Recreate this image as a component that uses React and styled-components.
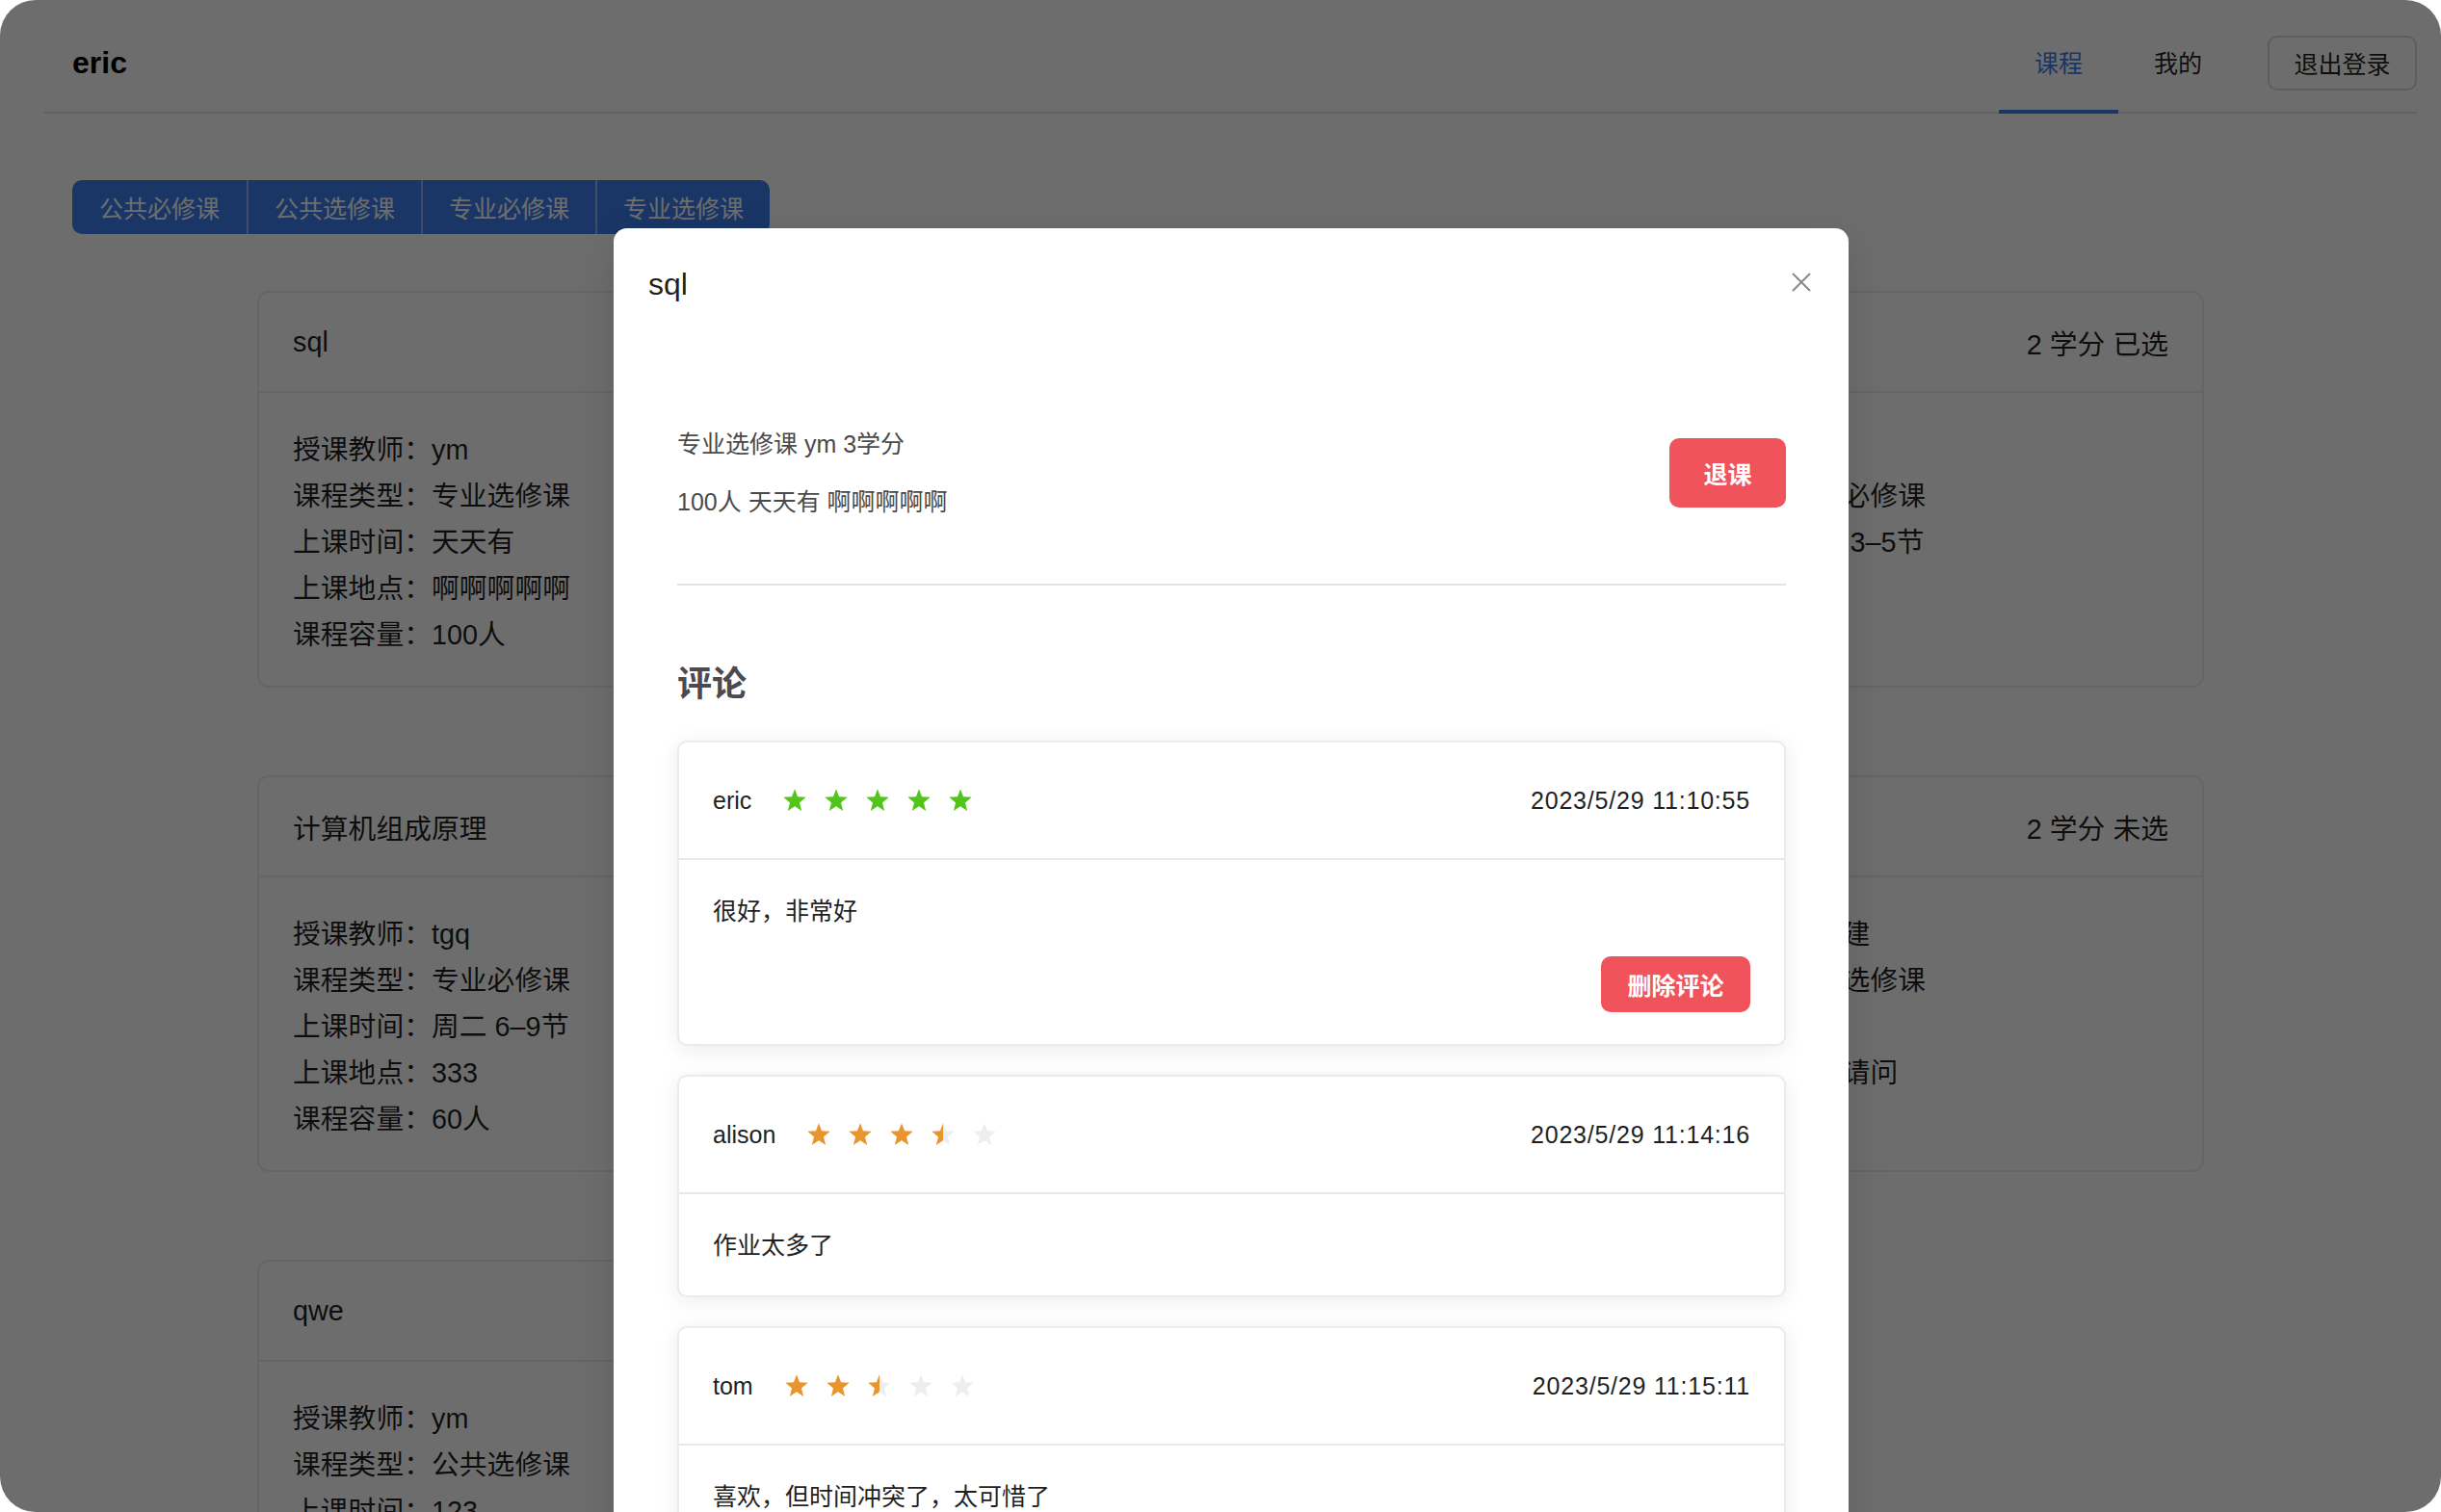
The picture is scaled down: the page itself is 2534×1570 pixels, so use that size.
import { useId } from "react";
import styled, { createGlobalStyle } from "styled-components";

const BLUE = "#3b7ff0";
const RED = "#f0535b";

const GlobalStyle = createGlobalStyle`
  html, body {
    margin: 0;
    padding: 0;
    background: #fff;
  }
  body {
    font-family: "Liberation Sans", "Noto Sans CJK SC", sans-serif;
  }
  * {
    box-sizing: border-box;
  }
`;

const Window = styled.div`
  position: relative;
  width: 2534px;
  height: 1570px;
  border-radius: 37px;
  overflow: hidden;
  background: #fff;
  color: rgba(0, 0, 0, 0.88);
`;

const Header = styled.header`
  display: flex;
  align-items: center;
  height: 118px;
  margin: 0 25px 0 46px;
  padding: 14px 0 0 29px;
  border-bottom: 2px solid #e4e4e4;
`;

const Brand = styled.div`
  font-size: 32px;
  font-weight: 700;
  color: #000;
`;

const Menu = styled.nav`
  display: flex;
  align-self: stretch;
  margin-left: auto;
`;

const MenuItem = styled.div`
  display: flex;
  align-items: center;
  padding: 0 37px;
  margin-bottom: -2px;
  font-size: 25px;
  color: ${(p) => (p.$active ? BLUE : "rgba(0, 0, 0, 0.88)")};
  border-bottom: 4px solid ${(p) => (p.$active ? BLUE : "transparent")};
`;

const LogoutButton = styled.button`
  width: 155px;
  height: 57px;
  margin-left: 31px;
  border: 2px solid #d9d9d9;
  border-radius: 10px;
  background: #fff;
  font-family: inherit;
  font-size: 25px;
  color: rgba(0, 0, 0, 0.88);
`;

const TypeTabs = styled.div`
  display: flex;
  margin: 69px 0 0 75px;
`;

const TypeTab = styled.div`
  width: 181px;
  height: 56px;
  display: flex;
  align-items: center;
  justify-content: center;
  background: ${BLUE};
  color: #fff;
  font-size: 25px;
  border-left: 2px solid #93b6f2;
  &:first-child {
    border-left: none;
    border-radius: 10px 0 0 10px;
  }
  &:last-child {
    border-radius: 0 10px 10px 0;
  }
`;

const CourseList = styled.div`
  display: flex;
  flex-direction: column;
  align-items: flex-start;
  gap: 91px;
  margin-top: 59px;
  padding: 0 246px 0 267px;
`;

const CourseCard = styled.div`
  width: ${(p) => (p.$narrow ? "1500px" : "100%")};
  border: 2px solid #ececec;
  border-radius: 12px;
  font-size: 28.8px;
`;

const CourseHead = styled.div`
  display: flex;
  align-items: center;
  justify-content: space-between;
  height: 104px;
  padding: 0 35px;
  border-bottom: 2px solid #ececec;
`;

const CourseBody = styled.div`
  display: grid;
  grid-template-columns: 1fr 540px;
  padding: 35px 35px 29px;
`;

const InfoLine = styled.div`
  height: 48px;
  line-height: 48px;
  white-space: nowrap;
`;

const Mask = styled.div`
  position: absolute;
  inset: 0;
  background: rgba(0, 0, 0, 0.573);
`;

const Modal = styled.div`
  position: absolute;
  top: 237px;
  left: 637px;
  width: 1282px;
  height: 1500px;
  background: #fff;
  border-radius: 14px;
  box-shadow: 0 12px 40px rgba(0, 0, 0, 0.12);
`;

const ModalHeader = styled.div`
  padding: 40px 36px 0;
`;

const ModalTitle = styled.div`
  font-size: 32px;
  line-height: 36px;
  color: rgba(0, 0, 0, 0.88);
`;

const CloseButton = styled.button`
  position: absolute;
  top: 45px;
  right: 38px;
  width: 22px;
  height: 22px;
  padding: 0;
  border: none;
  background: none;
  display: flex;
`;

const ModalBody = styled.div`
  padding: 118px 65px 0 66px;
`;

const CourseSummary = styled.div`
  display: flex;
  align-items: center;
  justify-content: space-between;
`;

const SummaryLine = styled.div`
  font-size: 25px;
  line-height: 60px;
  color: #4a4a4a;
`;

const DangerButton = styled.button`
  width: ${(p) => p.$w}px;
  height: ${(p) => p.$h}px;
  border: none;
  border-radius: 10px;
  background: ${RED};
  color: #fff;
  font-family: inherit;
  font-size: 25px;
  font-weight: 700;
`;

const Divider = styled.div`
  margin-top: 55px;
  border-top: 2px solid #e4e4e8;
`;

const SectionTitle = styled.h2`
  margin: 78px 0 33px;
  font-size: 36px;
  line-height: 50px;
  font-weight: 700;
  color: #4a4a4f;
`;

const CommentList = styled.div`
  display: flex;
  flex-direction: column;
  gap: 30px;
`;

const CommentCard = styled.div`
  border: 2px solid #ebebef;
  border-radius: 10px;
  background: #fff;
  box-shadow: 0 4px 22px rgba(0, 0, 0, 0.08);
`;

const CommentHead = styled.div`
  display: flex;
  align-items: center;
  height: 122px;
  padding: 0 35px;
  border-bottom: 2px solid #e8e8ec;
  font-size: 25px;
  color: #1f1f1f;
`;

const Stars = styled.div`
  display: flex;
  gap: 17px;
  margin-left: 32px;
`;

const DateText = styled.div`
  margin-left: auto;
  letter-spacing: 0.8px;
`;

const CommentBody = styled.div`
  padding: 34px 35px 33px;
  font-size: 25px;
  color: #1f1f1f;
`;

const CommentText = styled.p`
  margin: 0;
  line-height: 38px;
`;

const CommentActions = styled.div`
  display: flex;
  justify-content: flex-end;
  margin-top: 28px;
`;

const STAR_POINTS =
  "12,1.2 14.8,8.6 22.8,9.1 16.6,14.2 18.6,22.1 12,17.7 5.4,22.1 7.4,14.2 1.2,9.1 9.2,8.6";

const Star = ({ color, part }) => {
  const id = "g" + useId().replace(/[^a-zA-Z0-9]/g, "");
  const empty = "#eceef2";
  const fill = part >= 1 ? color : part <= 0 ? empty : `url(#${id})`;
  return (
    <svg width="26" height="26" viewBox="0 0 24 24">
      {part > 0 && part < 1 && (
        <defs>
          <linearGradient id={id}>
            <stop offset="50%" stopColor={color} />
            <stop offset="50%" stopColor={empty} />
          </linearGradient>
        </defs>
      )}
      <polygon points={STAR_POINTS} fill={fill} />
    </svg>
  );
};

const Rating = ({ value, color }) => (
  <Stars>
    {[0, 1, 2, 3, 4].map((i) => (
      <Star key={i} color={color} part={value - i} />
    ))}
  </Stars>
);

const courses = [
  {
    name: "sql",
    extra: "2 学分 已选",
    left: ["授课教师：ym", "课程类型：专业选修课", "上课时间：天天有", "上课地点：啊啊啊啊啊", "课程容量：100人"],
    right: ["授课教师：王五", "课程类型：公共必修课", "上课时间：周一 3–5节", "上课地点：一教", "课程容量：50人"],
  },
  {
    name: "计算机组成原理",
    extra: "2 学分 未选",
    left: ["授课教师：tgq", "课程类型：专业必修课", "上课时间：周二 6–9节", "上课地点：333", "课程容量：60人"],
    right: ["授课教师：李小建", "课程类型：公共选修课", "上课时间：周三", "上课地点：请问请问", "课程容量：30人"],
  },
  {
    name: "qwe",
    extra: "3 学分 未选",
    narrow: true,
    left: ["授课教师：ym", "课程类型：公共选修课", "上课时间：123", "上课地点：123", "课程容量：10人"],
    right: [],
  },
];

const comments = [
  { user: "eric", rate: 5, color: "#52c41a", time: "2023/5/29 11:10:55", text: "很好，非常好", mine: true },
  { user: "alison", rate: 3.5, color: "#e8952e", time: "2023/5/29 11:14:16", text: "作业太多了" },
  { user: "tom", rate: 2.5, color: "#e8952e", time: "2023/5/29 11:15:11", text: "喜欢，但时间冲突了，太可惜了" },
];

const App = () => {
  return (
    <Window>
      <GlobalStyle />
      <Header>
        <Brand>eric</Brand>
        <Menu>
          <MenuItem $active>课程</MenuItem>
          <MenuItem>我的</MenuItem>
        </Menu>
        <LogoutButton>退出登录</LogoutButton>
      </Header>

      <TypeTabs>
        <TypeTab>公共必修课</TypeTab>
        <TypeTab>公共选修课</TypeTab>
        <TypeTab>专业必修课</TypeTab>
        <TypeTab>专业选修课</TypeTab>
      </TypeTabs>

      <CourseList>
        {courses.map((c) => (
          <CourseCard key={c.name} $narrow={c.narrow}>
            <CourseHead>
              <span>{c.name}</span>
              <span>{c.extra}</span>
            </CourseHead>
            <CourseBody>
              <div>
                {c.left.map((l) => (
                  <InfoLine key={l}>{l}</InfoLine>
                ))}
              </div>
              <div>
                {c.right.map((l) => (
                  <InfoLine key={l}>{l}</InfoLine>
                ))}
              </div>
            </CourseBody>
          </CourseCard>
        ))}
      </CourseList>

      <Mask />

      <Modal>
        <ModalHeader>
          <ModalTitle>sql</ModalTitle>
        </ModalHeader>
        <CloseButton>
          <svg width="22" height="22" viewBox="0 0 22 22">
            <path d="M2 2 L20 20 M20 2 L2 20" stroke="#88888d" strokeWidth="2" />
          </svg>
        </CloseButton>
        <ModalBody>
          <CourseSummary>
            <div>
              <SummaryLine>专业选修课 ym 3学分</SummaryLine>
              <SummaryLine>100人 天天有 啊啊啊啊啊</SummaryLine>
            </div>
            <DangerButton $w={121} $h={72}>退课</DangerButton>
          </CourseSummary>
          <Divider />
          <SectionTitle>评论</SectionTitle>
          <CommentList>
            {comments.map((c) => (
              <CommentCard key={c.user}>
                <CommentHead>
                  <span>{c.user}</span>
                  <Rating value={c.rate} color={c.color} />
                  <DateText>{c.time}</DateText>
                </CommentHead>
                <CommentBody>
                  <CommentText>{c.text}</CommentText>
                  {c.mine && (
                    <CommentActions>
                      <DangerButton $w={155} $h={58}>删除评论</DangerButton>
                    </CommentActions>
                  )}
                </CommentBody>
              </CommentCard>
            ))}
          </CommentList>
        </ModalBody>
      </Modal>
    </Window>
  );
};

export default App;
